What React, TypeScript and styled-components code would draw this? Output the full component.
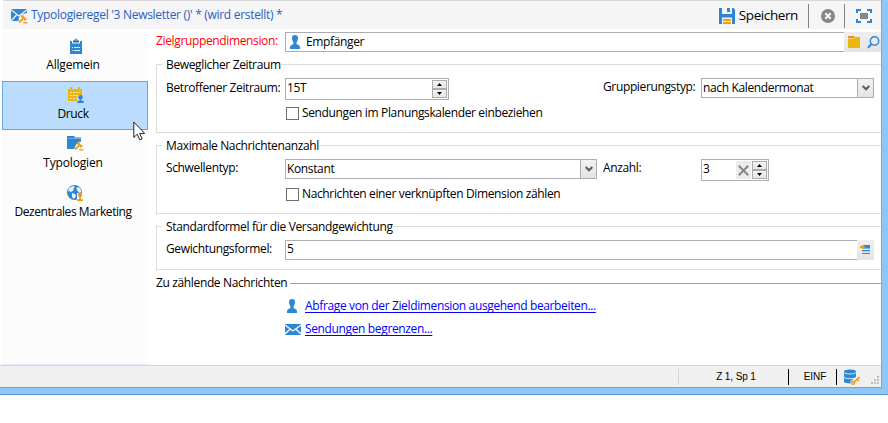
import React from 'react';
import styled, { createGlobalStyle } from 'styled-components';

const Global = createGlobalStyle`
  * { box-sizing: border-box; }
  html, body { margin: 0; background: #fff; overflow: hidden; }
  body { font: 12px/16px "Open Sans", "Noto Sans", sans-serif; letter-spacing: -0.36px; color: #000; }
  svg { display: block; flex: none; }
`;

const Text = styled.span<{ $ls?: number }>`
  white-space: nowrap;
  ${p => p.$ls !== undefined && `letter-spacing: ${p.$ls}px;`}
`;
const Frame = styled.div`
  width: 888px; height: 395px;
  background: #8dc6f8;
  border-bottom: 1px solid #5f96c6;
  padding-right: 6px;
`;
const Window = styled.div`
  height: 388px; background: #fff;
  border-right: 1px solid #7ba9d2;
  border-bottom: 1px solid #7ba2c4;
  display: flex; flex-direction: column;
`;
const Header = styled.header`
  height: 29px; flex: none;
  margin-left: 3px; padding: 2px 9px 0 8px;
  background: #f5f5f5; border-top: 1px solid #d9d9d9;
  display: flex; align-items: center;
`;
const Title = styled.h1`
  margin: -2px 0 0 3px; flex: 1;
  font-size: 12px; line-height: 16px; font-weight: 400; color: #2a5fc4;
`;
const SaveButton = styled.div`
  display: flex; align-items: center; gap: 4px;
  font-size: 13.5px; line-height: 18px; letter-spacing: -0.4px;
`;
const SaveLabel = styled.span`
  margin-top: -2px;
`;
const HeaderDivider = styled.i<{ $l: number; $r: number }>`
  width: 1px; height: 24px; background: #808080;
  margin: 0 ${p => p.$r}px 0 ${p => p.$l}px;
`;
const Body = styled.div`
  flex: 1; display: flex; min-height: 0;
`;
const Sidebar = styled.nav`
  position: relative;
  width: 146px; margin: 3px 8px 0 2px; flex: none;
  background: #fcfcfc; border-bottom: 1px solid #e4ecfa;
`;
const NavItem = styled.div<{ $active?: boolean }>`
  height: 49px; padding: 5px 4px 0 0;
  border: 1px solid ${p => (p.$active ? '#64a5e2' : 'transparent')};
  background: ${p => (p.$active ? '#bbdcfc' : 'transparent')};
  display: flex; flex-direction: column; align-items: center; gap: 3px;
  & > svg { margin-left: 5px; }
`;
const Cursor = styled.svg`
  position: absolute; left: 131px; top: 89px;
`;
const Main = styled.main`
  flex: 1; min-width: 0; display: flex; flex-direction: column; padding-top: 3px;
`;
const Row = styled.div<{ $h: number; $mt?: number }>`
  display: flex; align-items: flex-start;
  height: ${p => p.$h}px; margin-top: ${p => p.$mt ?? 0}px;
`;
const Label = styled.label<{ $w: number; $red?: boolean; $dy?: number }>`
  width: ${p => p.$w}px; flex: none; white-space: nowrap;
  padding-top: ${p => p.$dy ?? 1}px;
  color: ${p => (p.$red ? '#f00' : '#000')};
`;
const Field = styled.div<{ $w?: number; $h?: number; $open?: boolean }>`
  ${p => (p.$w ? `width: ${p.$w}px; flex: none;` : 'flex: 1;')}
  height: ${p => p.$h ?? 20}px;
  border: 1px solid #abadb3; ${p => p.$open && 'border-right: 0;'}
  display: flex; align-items: stretch; background: #fff;
`;
const Value = styled.span<{ $lh?: number }>`
  flex: 1; padding-left: 1px; line-height: ${p => p.$lh ?? 17}px; white-space: nowrap;
`;
const IconSlot = styled.span`
  width: 19px; padding: 1px 0 0 1px;
`;
const ArrowButton = styled.span`
  width: 16px; border-left: 1px solid #abadb3;
  background: linear-gradient(#f2f2f2, #e4e4e4);
  display: flex; align-items: center; justify-content: center;
`;
const Spin = styled.span`
  width: 15px; margin: 1px; display: grid; grid-template-rows: 9px 9px;
`;
const SpinButton = styled.span`
  border: 1px solid #acacac; background: linear-gradient(#f4f4f4, #e6e6e6);
  display: flex; align-items: center; justify-content: center;
`;
const ClearButton = styled.span`
  width: 15px; margin: 1px 0; background: #ececec;
  display: flex; align-items: center; justify-content: center;
`;
const ToolStrip = styled.span<{ $w: number; $pad: string; $gap?: number }>`
  width: ${p => p.$w}px; height: 20px; padding: ${p => p.$pad}; flex: none;
  background: linear-gradient(#efefef, #e4e4e4);
  display: flex; gap: ${p => p.$gap ?? 0}px;
`;
const Group = styled.section<{ $h: number; $mt: number }>`
  height: ${p => p.$h}px; margin-top: ${p => p.$mt}px; flex: none;
  border: 1px solid #dcdcdc; border-right: 0;
  padding-left: 9px;
`;
const Legend = styled.h2`
  margin: -8px 0 0 -4px; padding: 0 0 0 4px; width: max-content;
  font-size: 12px; line-height: 16px; font-weight: 400; background: #fff;
`;
const Spacer = styled.span`flex: 1;`;
const CheckRow = styled.div<{ $mt: number }>`
  display: flex; align-items: center; gap: 3px;
  height: 14px; margin: ${p => p.$mt}px 0 0 120px;
`;
const CheckBox = styled.i`
  width: 13px; height: 13px; border: 1px solid #6f6f6f; background: #fff;
`;
const Section = styled.div`
  display: flex; align-items: center; gap: 3px; margin-top: 5px; height: 16px;
`;
const Rule = styled.i`
  flex: 1; height: 1px; background: #a0a0a0; margin-top: 1px;
`;
const LinkRow = styled.div<{ $mt: number }>`
  display: flex; align-items: center; gap: 4px; height: 16px;
  margin: ${p => p.$mt}px 0 0 129px;
`;
const LinkIcon = styled.span`
  margin-left: -1px; padding-right: 1px;
`;
const Link = styled.a`
  color: #00f; text-decoration: underline; white-space: nowrap;
  text-decoration-thickness: 1px; text-underline-offset: 2px;
  text-decoration-skip-ink: none;
`;
const StatusBar = styled.footer`
  height: 22px; flex: none; background: #f0f0f0; border-top: 1px solid #d7d7d7;
  display: flex; align-items: center; justify-content: flex-end;
  font: 10px/12px "Liberation Sans", Arial, sans-serif; letter-spacing: -0.1px;
`;
const StatusCell = styled.span<{ $w: number }>`
  width: ${p => p.$w}px; text-align: center; padding: 1px 0 0 5px;
`;
const StatusLine = styled.i<{ $c: string }>`
  width: 1px; height: 16px; background: ${p => p.$c};
`;

const BLUE = '#2f86d3';
const ORANGE = '#f39a10';

const Gavel = ({ x, y }: { x: number; y: number }) => (
  <g transform={`translate(${x} ${y})`} stroke={ORANGE} fill="none">
    <path d="M.5 8 5 3.500" strokeWidth="1.8" />
    <path d="M2.500 2.300 4.700.6M5.800 5.800 8 4" strokeWidth="1.6" />
    <path d="M3.500 1.500 7 5" strokeWidth="1.800" />
    <path d="M4.800 8.300H9" strokeWidth="1.4" />
  </g>
);
const MailRule = () => (
  <svg width="17" height="16" viewBox="0 0 17 16">
    <path d="M0 1h16v12H0z" fill={BLUE} />
    <path d="m0 1.700 8 6.300 8-6.300M0 13l5.500-6" fill="none" stroke="#f5f5f5" strokeWidth="1.2" />
    <path d="M8 9.500 10.500 6.300 16.500 5v11H7z" fill="#f5f5f5" />
    <Gavel x={7.5} y={6.5} />
  </svg>
);
const Save = () => (
  <svg width="16" height="16" viewBox="0 0 16 16">
    <path d="M0 0h3v6h10V0h1.5L16 1.500V16H0z" fill={BLUE} />
    <path d="M4 0h8v5H4z" fill="#f5f5f5" /><path d="M8 0h3v4H8z" fill={BLUE} />
    <path d="M3 9.500h10V16H3z" fill="#f5f5f5" />
    <path d="M4 11h8v2H4zM4 14h8v2H4z" fill={ORANGE} />
  </svg>
);
const Close = () => (
  <svg width="14" height="14" viewBox="0 0 14 14">
    <circle cx="7" cy="7" r="7" fill="#868686" />
    <path d="m4.300 4.300 5.400 5.400m0-5.400L4.300 9.700" stroke="#f5f5f5" strokeWidth="2.200" />
  </svg>
);
const Fullscreen = () => (
  <svg width="16" height="14" viewBox="0 0 16 14">
    <path d="M1 4V1h4M11 1h4v3M15 10v3h-4M5 13H1v-3" fill="none" stroke={BLUE} strokeWidth="2" />
    <path d="M4 4h8v6H4z" fill="#868686" />
  </svg>
);
const Clipboard = () => (
  <svg width="16" height="16" viewBox="0 0 16 16">
    <path d="M2 3h12v13H2z" fill={BLUE} />
    <path d="M4 3h8v2.500H4z" fill="#fcfcfc" />
    <path d="M5 4.500V2.500h1.500C6.500-.2 9.500-.2 9.500 2.500H11v2z" fill="#2b68a3" />
    <path d="M7.500 1.200h1v1.500h-1z" fill="#fff" />
    <path d="M4 9.500h1m1 0h6M4 12.500h1m1 0h6" stroke="#d6e8f8" />
  </svg>
);
const CalendarUser = () => (
  <svg width="17" height="16" viewBox="0 0 17 16">
    <path d="M1 2h14v12H1z" fill="#edb60c" />
    <path d="M4 0v3m8-3v3" stroke="#edb60c" strokeWidth="2" />
    <path d="M3 5.500h10M3 8.500h10M3 11.500h7" stroke="#fbe9b0" strokeDasharray="2 1" />
    <path d="M10 9h7v7h-7z" fill="#bbdcfc" />
    <circle cx="13.500" cy="10.200" r="2.200" fill={BLUE} />
    <path d="M12.700 11h1.600v2.500l2.500.8V16h-6.600v-1.700l2.500-.8z" fill={BLUE} />
  </svg>
);
const FolderRule = () => (
  <svg width="17" height="16" viewBox="0 0 17 16">
    <path d="M0 0h7.500v1.500H14V13H0z" fill={BLUE} />
    <path d="M0 2.500h14" stroke="#69a9e0" />
    <path d="M8 10.500 11 6l5.500-.5V15H7z" fill="#fcfcfc" />
    <Gavel x={7.5} y={5.5} />
  </svg>
);
const GlobeUser = () => (
  <svg width="17" height="16" viewBox="0 0 17 16">
    <circle cx="7.500" cy="7.500" r="7.500" fill={BLUE} />
    <path d="m2 3 4-2 2 1-2 2 1 1-3 2-2-1-1 1zM5 8l3 1 1 2-2 3-2-2zM10 2l3 1 1.500 4-2 1-2-2-1-2z" fill="#e8f3fc" />
    <path d="M10 8h6v8h-6z" fill="#fcfcfc" />
    <circle cx="13" cy="9.700" r="2.200" fill={ORANGE} />
    <path d="M12.200 11h1.600v3l2.200.5V16h-6v-1.500l2.200-.5z" fill={ORANGE} />
  </svg>
);
const Person = () => (
  <svg width="16" height="16" viewBox="0 0 16 16">
    <path d="M8 1c2.400 0 3.200 1.500 3 3.500C10.900 6 10.200 7.500 9.600 8.200V10l2.700 1.500c.6.400.7 1.500.7 3.500H3c0-2 .1-3.100.7-3.500L6.400 10V8.200C5.800 7.500 5.100 6 5 4.500 4.800 2.500 5.600 1 8 1z" fill={BLUE} />
  </svg>
);
const Mail = () => (
  <svg width="16" height="11" viewBox="0 0 16 11">
    <path d="M0 0h16v11H0z" fill={BLUE} />
    <path d="m0 1 8 6 8-6M0 10l5.300-5M16 10l-5.300-5" fill="none" stroke="#fff" strokeWidth="1.300" />
  </svg>
);
const Folder = () => (
  <svg width="12" height="12" viewBox="0 0 12 12">
    <path d="M0 0h6.500v2H0z" fill="#ee8d1d" /><path d="M0 2.500h6L7 1h5v11H0z" fill="#edb60c" />
  </svg>
);
const Search = () => (
  <svg width="13" height="13" viewBox="0 0 13 13">
    <circle cx="7.500" cy="5" r="4.200" fill="none" stroke={BLUE} strokeWidth="1.500" />
    <path d="M4.500 8 1 11.700" stroke={BLUE} strokeWidth="2" />
  </svg>
);
const ListEdit = () => (
  <svg width="10" height="9" viewBox="0 0 10 9">
    <path d="M4 0h6v3H4z" fill={BLUE} />
    <path d="M4 3h6v1H4z" fill="#7fb2e3" />
    <path d="M2 5h8v1H2zM2 8h8v1H2z" fill={BLUE} />
    <path d="M2 6h8v1H2z" fill="#a9cbed" />
    <path d="M0 1h2V0h1.500L5 2 3.500 4H2V3H0z" fill={ORANGE} />
  </svg>
);
const Chevron = () => (
  <svg width="8" height="6" viewBox="0 0 8 6">
    <path d="m.7 1 3.300 3.300L7.300 1" fill="none" stroke="#5b5b5b" strokeWidth="2" />
  </svg>
);
const Triangle = ({ up }: { up?: boolean }) => (
  <svg width="5" height="3" viewBox="0 0 5 3">
    <path d={up ? 'M0 3 2.500 0 5 3z' : 'M0 0h5L2.500 3z'} fill="#000" />
  </svg>
);
const Cross = () => (
  <svg width="11" height="11" viewBox="0 0 11 11">
    <path d="m.8.8 9.400 9.400m0-9.400L.8 10.200" stroke="#868686" strokeWidth="2" />
  </svg>
);
const Database = () => (
  <svg width="16" height="16" viewBox="0 0 16 16">
    <path d="M0 2.500C0-.3 12-.3 12 2.500v10c0 2.500-12 2.500-12 0z" fill={BLUE} />
    <path d="M0 3.300c0 2.200 12 2.200 12 0M0 8c0 2.200 12 2.200 12 0" fill="none" stroke="#d9e9f7" />
    <path d="M6.500 16v-4L12 8h4v8z" fill="#f0f0f0" />
    <path d="m9.500 13.500 6-5.300m-2.500 2 1.800 1.800" stroke={ORANGE} strokeWidth="1.600" />
    <circle cx="9" cy="13.800" r="1.500" fill="none" stroke={ORANGE} strokeWidth="1.400" />
  </svg>
);
const Grip = () => (
  <svg width="9" height="9" viewBox="0 0 9 9">
    <path d="M6 0h2v2H6zM3 3h2v2H3zM6 3h2v2H6zM0 6h2v2H0zM3 6h2v2H3zM6 6h2v2H6z" fill="#bdbdbd" />
  </svg>
);

const StatusIcons = styled.span`
  display: flex; align-items: flex-end; gap: 11px; padding: 0 1px 0 7px; height: 17px;
`;

const Spinner = () => (
  <Spin>
    <SpinButton><Triangle up /></SpinButton>
    <SpinButton><Triangle /></SpinButton>
  </Spin>
);

export default function App() {
  return (
    <>
      <Global />
      <Frame>
        <Window>
          <Header>
            <MailRule />
            <Title><Text $ls={-0.3}>Typologieregel '3 Newsletter ()' * (wird erstellt) *</Text></Title>
            <SaveButton><Save /><SaveLabel>Speichern</SaveLabel></SaveButton>
            <HeaderDivider $l={10} $r={12} />
            <Close />
            <HeaderDivider $l={9} $r={11} />
            <Fullscreen />
          </Header>
          <Body>
            <Sidebar>
              <NavItem><Clipboard /><Text $ls={-0.2}>Allgemein</Text></NavItem>
              <NavItem $active><CalendarUser /><Text>Druck</Text></NavItem>
              <NavItem><FolderRule /><Text $ls={-0.15}>Typologien</Text></NavItem>
              <NavItem><GlobeUser /><Text $ls={-0.43}>Dezentrales Marketing</Text></NavItem>
              <Cursor width="13" height="20" viewBox="0 0 13 20">
                <path d="M.8 1v15.500l3.500-3.300 2.500 5.700 2.400-1-2.500-5.500h5z" fill="#fff" stroke="#222" />
              </Cursor>
            </Sidebar>
            <Main>
              <Row $h={20}>
                <Label $w={129} $red>Zielgruppendimension:</Label>
                <Field $open><IconSlot><Person /></IconSlot><Value>Empfänger</Value></Field>
                <ToolStrip $w={37} $pad="4px 0 0 4px" $gap={7}><Folder /><Search /></ToolStrip>
              </Row>
              <Group $mt={12} $h={69}>
                <Legend>Beweglicher Zeitraum</Legend>
                <Row $h={22} $mt={5}>
                  <Label $w={119} $dy={2}>Betroffener Zeitraum:</Label>
                  <Field $w={164} $h={22}><Value>15T</Value><Spinner /></Field>
                  <Spacer />
                  <Label $w={98}>Gruppierungstyp:</Label>
                  <Field $w={173}><Value>nach Kalendermonat</Value><ArrowButton><Chevron /></ArrowButton></Field>
                  <Label $w={7} />
                </Row>
                <CheckRow $mt={6}><CheckBox /><Text>Sendungen im Planungskalender einbeziehen</Text></CheckRow>
              </Group>
              <Group $mt={12} $h={69}>
                <Legend>Maximale Nachrichtenanzahl</Legend>
                <Row $h={22} $mt={5}>
                  <Label $w={119}>Schwellentyp:</Label>
                  <Field $w={312}><Value>Konstant</Value><ArrowButton><Chevron /></ArrowButton></Field>
                  <Label $w={6} />
                  <Label $w={98}>Anzahl:</Label>
                  <Field $w={68} $h={22}><Value>3</Value><ClearButton><Cross /></ClearButton><Spinner /></Field>
                </Row>
                <CheckRow $mt={6}><CheckBox /><Text>Nachrichten einer verknüpften Dimension zählen</Text></CheckRow>
              </Group>
              <Group $mt={12} $h={44}>
                <Legend>Standardformel für die Versandgewichtung</Legend>
                <Row $h={22} $mt={5}>
                  <Label $w={119}>Gewichtungsformel:</Label>
                  <Field $open><Value $lh={15}>5</Value></Field>
                  <ToolStrip $w={17} $pad="5px 0 0 3px"><ListEdit /></ToolStrip>
                  <Label $w={7} />
                </Row>
              </Group>
              <Section><Text>Zu zählende Nachrichten</Text><Rule /></Section>
              <LinkRow $mt={7}><LinkIcon><Person /></LinkIcon><Link>Abfrage von der Zieldimension ausgehend bearbeiten...</Link></LinkRow>
              <LinkRow $mt={7}><Mail /><Link>Sendungen begrenzen...</Link></LinkRow>
            </Main>
          </Body>
          <StatusBar>
            <StatusLine $c="#d7d7d7" />
            <StatusCell $w={109}>Z 1, Sp 1</StatusCell>
            <StatusLine $c="#000" />
            <StatusCell $w={47}>EINF</StatusCell>
            <StatusLine $c="#000" />
            <StatusIcons><Database /><Grip /></StatusIcons>
          </StatusBar>
        </Window>
      </Frame>
    </>
  );
}
